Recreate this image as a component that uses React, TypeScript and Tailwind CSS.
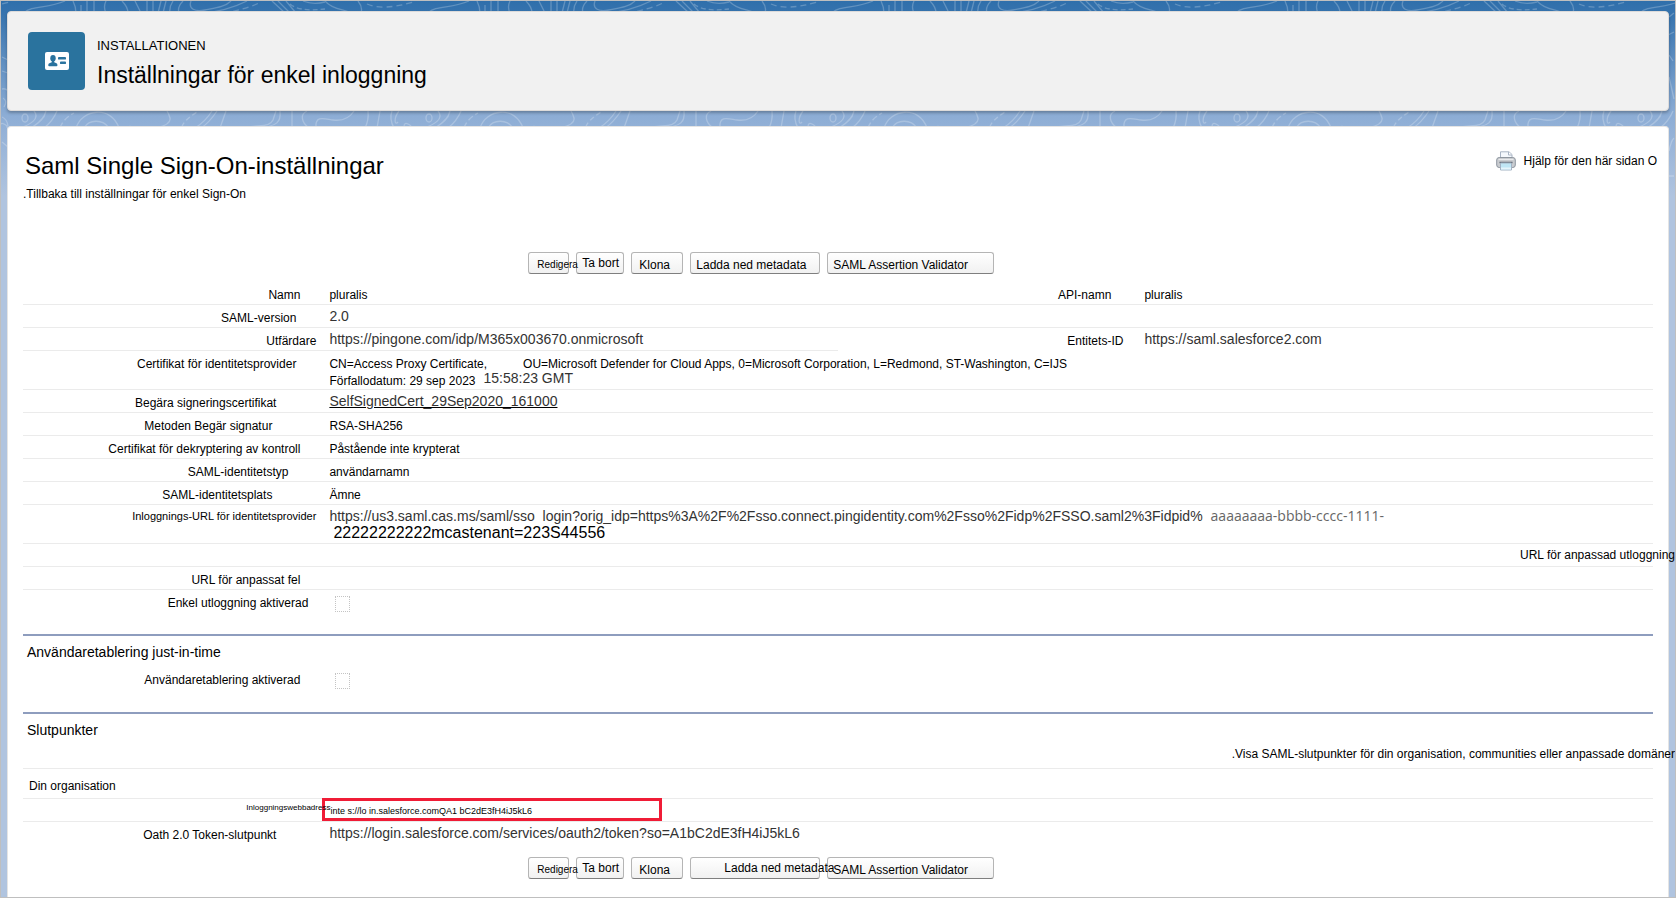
import type { ReactNode } from "react";
import clsx from "clsx";

type Inset = "none" | "xs" | "sm" | "md" | "lg" | "xl" | "2xl";

const insetClass: Record<Inset, string> = {
  none: "pr-0",
  xs: "pr-2",
  sm: "pr-4",
  md: "pr-5",
  lg: "pr-7",
  xl: "pr-10",
  "2xl": "pr-11",
};

function TopoBackground() {
  return (
    <svg
      aria-hidden="true"
      className="absolute inset-x-0 top-0 -z-10 h-[230px] w-full"
    >
      <defs>
        <linearGradient id="sky" x1="0" y1="0" x2="0" y2="1">
          <stop offset="0" stopColor="#2f6fab" />
          <stop offset="0.05" stopColor="#3673ae" />
          <stop offset="0.5" stopColor="#8dadd5" />
          <stop offset="0.85" stopColor="#b0c4df" />
          <stop offset="1" stopColor="#b0c4df" />
        </linearGradient>
        <pattern
          id="topo"
          x="156"
          y="0"
          width="404"
          height="230"
          patternUnits="userSpaceOnUse"
        >
          <g fill="none" stroke="#fff" strokeOpacity="0.23" strokeWidth="1.3">
            <path d="M4 0L1 12M9 0L6 12M16 0Q12 6 13 12M26 0Q20 6 22 12" />
            <path d="M34 0C31 8 38 11 48 9S68 6 74 0M46 12C60 11 74 8 90 0" />
            <path d="M66 12Q88 9 104 1" strokeDasharray="6 4" />
            <path d="M115 0L128 12M121 0L133 12M129 0L139 12" />
            <path d="M133 3Q142 11 168 8" strokeDasharray="5 3" />
            <path d="M146 0Q156 4 168 1M168 0C176 9 186 8 192 11M201 0Q206 6 204 12" />
            <path d="M210 3Q226 10 256 1" strokeDasharray="6 4" />
            <path d="M271 12C279 4 294 8 312 0" />
            <path d="M320 0Q323 6 323 12M328 4V12M334 0V12M341 0V12M353 0Q350 6 353 12M369 0Q375 6 375 12M382 0L388 12M394 0V12M400 0V12" />
            <path d="M0 127C8 125 14 122 13 117Q12 113 10 110" />
            <path d="M25 126Q26 120 40 111" strokeDasharray="5 3" />
            <path d="M55 110Q48 121 38 127M60 110Q52 122 44 127M69 110L63 127" />
            <path d="M83 127C104 123 112 127 116 119L119 110M98 127C122 126 124 120 123 110M135 110V127" />
            <path d="M152 127C144 121 143 113 150 110M159 126C158 114 168 118 176 119S192 118 197 110M211 110Q212 119 208 127M223 110L220 127M235 110Q232 118 237 127" />
            <path d="M242 110C236 118 238 125 241 121M247 126Q247 121 251 123T254 127" />
            <ellipse cx="272" cy="117" rx="3" ry="4" />
            <path d="M281 110C288 118 276 124 267 127M293 110C291 120 282 124 278 127M304 110Q300 120 291 127" />
            <path d="M307 127Q310 118 321 112" strokeDasharray="6 3" />
            <path d="M323 127C329 108 358 104 366 127M331 127C336 118 350 118 356 127" />
            <path d="M372 127Q378 124 380 127" />
          </g>
        </pattern>
      </defs>
      <rect width="100%" height="100%" fill="url(#sky)" />
      <rect width="100%" height="128" fill="url(#topo)" />
      <g fill="none" stroke="#fff" strokeOpacity="0.23" strokeWidth="1.3">
        <path d="M1 56L7 59M1 70L7 72M1 88Q5 87 7 90M2 97Q7 100 3 106M1 116Q6 118 7 125M1 141L7 146" />
      </g>
      <svg x="100%" overflow="visible">
        <g fill="none" stroke="#fff" strokeOpacity="0.23" strokeWidth="1.3">
          <path d="M-6 16L-1 12M-7 34L-1 31M-6 54L-2 60M-6 76L-1 98M-6 150Q-4 140-1 137M-7 175H-1" />
        </g>
      </svg>
    </svg>
  );
}

function IdCardIcon() {
  return (
    <svg width="24" height="18" viewBox="0 0 24 18" aria-hidden="true">
      <rect width="24" height="18" rx="2" fill="#fff" />
      <g fill="#2a739e">
        <ellipse cx="8" cy="6.2" rx="2.7" ry="3.2" />
        <path d="M6.8 8h2.4v2.2c1.6.6 3.2 1 3.2 2.6v.7c0 .5-.3.8-.8.8H4.1c-.5 0-.8-.3-.8-.8v-.7c0-1.6 1.9-2 3.5-2.6z" />
        <rect x="13" y="5" width="8" height="2.6" rx="0.9" />
        <rect x="15" y="9.5" width="6" height="2.6" rx="0.9" />
      </g>
    </svg>
  );
}

function PrinterIcon() {
  return (
    <svg width="20" height="20" viewBox="0 0 20 20" aria-hidden="true">
      <path d="M4.5 8V.8h8.5l3 2.700V8z" fill="#f4f8fc" stroke="#a9b4c4" />
      <path d="M12.5 1v3H16" fill="#fff" stroke="#a9b4c4" />
      <rect x="0.7" y="6.5" width="18.6" height="10" rx="2.5" fill="#c9ccd0" stroke="#8e969f" />
      <path d="M2.5 8.5h15" stroke="#e8eaec" />
      <path d="M3.5 11.5h13" stroke="#5d6670" strokeWidth="1.5" />
      <path d="M4.5 12h11v7h-11z" fill="#bfe6f5" stroke="#a4b3c4" />
      <path d="M5 16.5h10v2H5z" fill="#e6f6fc" />
    </svg>
  );
}

const buttonBase =
  "h-[22px] rounded-[3px] border border-[#b5b5b5] border-b-[#7f7f7f] bg-linear-to-b from-white to-[#f1f1f1] text-left text-xs leading-4 whitespace-nowrap";

function ActionButtons({ shifted = false }: { shifted?: boolean }) {
  return (
    <div className="ml-[31%] flex gap-[7px]">
      <button type="button" className={clsx(buttonBase, "w-[41px] pt-0.5 pl-2")}>
        <span className="relative z-10 text-[10px]">Redigera</span>
      </button>
      <button type="button" className={clsx(buttonBase, "w-12 pl-[5px]")}>
        Ta bort
      </button>
      <button type="button" className={clsx(buttonBase, "w-[52px] pt-1 pl-[7px]")}>
        Klona
      </button>
      <button
        type="button"
        className={clsx(
          buttonBase,
          "w-[130px]",
          shifted ? "pl-[33px]" : "pt-1 pl-[5px]",
        )}
      >
        <span className="relative z-10">Ladda ned metadata</span>
      </button>
      <button type="button" className={clsx(buttonBase, "w-[167px] pt-1 pl-[5px]")}>
        SAML Assertion Validator
      </button>
    </div>
  );
}

function LabelCell({
  children,
  inset = "md",
  htmlFor,
  small = false,
  line = true,
}: {
  children?: ReactNode;
  inset?: Inset;
  htmlFor?: string;
  small?: boolean;
  line?: boolean;
}) {
  return (
    <th
      scope="row"
      className={clsx(
        "h-[23px] w-[18%] text-right align-top leading-[18px] font-normal whitespace-nowrap",
        line && "border-b border-[#ebebeb]",
        small ? "pt-0.5 text-[11px]" : "pt-1 text-xs",
        insetClass[inset],
      )}
    >
      {htmlFor ? <label htmlFor={htmlFor}>{children}</label> : children}
    </th>
  );
}

function ValueCell({
  children,
  url = false,
  span = 3,
  line = true,
}: {
  children?: ReactNode;
  url?: boolean;
  span?: number;
  line?: boolean;
}) {
  return (
    <td
      colSpan={span}
      className={clsx(
        "pl-[13px] align-top leading-[18px] whitespace-nowrap",
        line && "border-b border-[#ebebeb]",
        url ? "pt-0.5 text-sm text-[#333]" : "pt-1 text-xs",
      )}
    >
      {children}
    </td>
  );
}

function CheckBox({ id }: { id: string }) {
  return (
    <input
      id={id}
      type="checkbox"
      className="mt-0.5 ml-1.5 block h-4 w-[15px] appearance-none border border-dotted border-[#c4c4c4] bg-white"
    />
  );
}

const tableClass = "w-full table-fixed border-separate border-spacing-0";

export default function App() {
  return (
    <div className="relative isolate flex min-h-screen flex-col overflow-hidden border border-[#bfbfbf] bg-[#b0c4df] px-1.5 pt-2.5 font-['Liberation_Sans',Arial,sans-serif] text-black">
      <TopoBackground />

      <header className="flex items-start gap-3 rounded border border-[#dddbda] bg-[#f1f1f1] py-5 pl-5 shadow-[0_2px_3px_rgba(0,0,0,0.25)]">
        <div className="flex h-[58px] w-[57px] items-center justify-center rounded bg-[#2a739e]">
          <IdCardIcon />
        </div>
        <div className="flex flex-col gap-1 pt-1">
          <p className="text-[13px] leading-5">INSTALLATIONEN</p>
          <h1 className="text-[23px] leading-[30px]">Inställningar för enkel inloggning</h1>
        </div>
      </header>

      <main className="mt-[15px] flex-1 rounded-t border border-b-0 border-[#e4e4e4] bg-white px-[15px] pt-6 pb-4">
        <div className="flex items-start justify-between">
          <div>
            <h2 className="pl-0.5 text-2xl leading-[30px]">Saml Single Sign-On-inställningar</h2>
            <a href="#tillbaka" className="block pt-0.5 text-xs leading-[22px]">
              .Tillbaka till inställningar för enkel Sign-On
            </a>
          </div>
          <a href="#help" className="-mr-1 flex items-center gap-2 text-xs leading-5">
            <PrinterIcon />
            Hjälp för den här sidan O
          </a>
        </div>

        <div className="mt-[47px] mb-2">
          <ActionButtons />
        </div>

        <table className={tableClass}>
          <colgroup>
            <col className="w-[18%]" />
            <col className="w-[32%]" />
            <col className="w-[18%]" />
            <col className="w-[32%]" />
          </colgroup>
          <tbody>
            <tr>
              <LabelCell inset="sm">Namn</LabelCell>
              <ValueCell span={1}>pluralis</ValueCell>
              <LabelCell>API-namn</LabelCell>
              <ValueCell span={1}>pluralis</ValueCell>
            </tr>
            <tr>
              <LabelCell>SAML-version</LabelCell>
              <ValueCell url>2.0</ValueCell>
            </tr>
            <tr>
              <LabelCell inset="none">Utfärdare</LabelCell>
              <ValueCell span={1} url>
                https://pingone.com/idp/M365x003670.onmicrosoft
              </ValueCell>
              <LabelCell inset="xs" line={false}>
                Entitets-ID
              </LabelCell>
              <ValueCell span={1} url line={false}>
                https://saml.salesforce2.com
              </ValueCell>
            </tr>
            <tr>
              <LabelCell>Certifikat för identitetsprovider</LabelCell>
              <ValueCell>
                <div className="flex gap-9">
                  <span>CN=Access Proxy Certificate,</span>
                  <span>
                    OU=Microsoft Defender for Cloud Apps, 0=Microsoft Corporation, L=Redmond,
                    ST-Washington, C=IJS
                  </span>
                </div>
                <div className="flex h-4 gap-2 leading-4">
                  <span>Förfallodatum: 29 sep 2023</span>
                  <span className="text-sm leading-[10px] text-[#333]">15:58:23 GMT</span>
                </div>
              </ValueCell>
            </tr>
            <tr>
              <LabelCell inset="xl">Begära signeringscertifikat</LabelCell>
              <ValueCell url>
                <a href="#cert" className="underline decoration-black underline-offset-1">
                  SelfSignedCert_29Sep2020_161000
                </a>
              </ValueCell>
            </tr>
            <tr>
              <LabelCell inset="2xl">Metoden Begär signatur</LabelCell>
              <ValueCell>RSA-SHA256</ValueCell>
            </tr>
            <tr>
              <LabelCell inset="sm">Certifikat för dekryptering av kontroll</LabelCell>
              <ValueCell>Påstående inte krypterat</ValueCell>
            </tr>
            <tr>
              <LabelCell inset="lg">SAML-identitetstyp</LabelCell>
              <ValueCell>användarnamn</ValueCell>
            </tr>
            <tr>
              <LabelCell inset="2xl">SAML-identitetsplats</LabelCell>
              <ValueCell>Ämne</ValueCell>
            </tr>
            <tr>
              <LabelCell inset="none" small>
                Inloggnings-URL för identitetsprovider
              </LabelCell>
              <ValueCell url>
                <div className="flex gap-2">
                  <span>
                    https://us3.saml.cas.ms/saml/sso&nbsp;&nbsp;login?orig_idp=https%3A%2F%2Fsso.connect.pingidentity.com%2Fsso%2Fidp%2FSSO.saml2%3Fidpid%
                  </span>
                  <span className="font-['Open_Sans','Noto_Sans',sans-serif] text-[#666]">
                    aaaaaaaa-bbbb-cccc-1111-
                  </span>
                </div>
                <div className="pb-0.5 pl-1 text-base leading-4 text-black">
                  22222222222mcastenant=223S44556
                </div>
              </ValueCell>
            </tr>
            <tr>
              <th
                scope="row"
                colSpan={4}
                className="h-[23px] border-b border-[#ebebeb] pt-0.5 text-right align-top text-xs leading-[18px] font-normal whitespace-nowrap"
              >
                <div className="-mr-[22px]">URL för anpassad utloggning</div>
              </th>
            </tr>
            <tr>
              <LabelCell inset="sm">URL för anpassat fel</LabelCell>
              <ValueCell />
            </tr>
            <tr>
              <LabelCell inset="xs" htmlFor="single-logout" line={false}>
                Enkel utloggning aktiverad
              </LabelCell>
              <ValueCell line={false}>
                <CheckBox id="single-logout" />
              </ValueCell>
            </tr>
          </tbody>
        </table>

        <section className="mt-[21px] border-t-2 border-[#8e9dbe] pt-1.5">
          <h3 className="pl-1 text-sm leading-5">Användaretablering just-in-time</h3>
          <table className={clsx(tableClass, "mt-[5px]")}>
            <tbody>
              <tr>
                <LabelCell inset="sm" htmlFor="user-provisioning" line={false}>
                  Användaretablering aktiverad
                </LabelCell>
                <ValueCell line={false}>
                  <CheckBox id="user-provisioning" />
                </ValueCell>
              </tr>
            </tbody>
          </table>
        </section>

        <section className="mt-[22px] border-t-2 border-[#8e9dbe] pt-1.5">
          <h3 className="pl-1 text-sm leading-5">Slutpunkter</h3>
          <p className="-mr-[22px] pt-[5px] text-right text-xs leading-[18px]">
            .Visa SAML-slutpunkter för din organisation, communities eller anpassade domäner
          </p>
          <h4 className="mt-[5px] border-y border-[#ebebeb] pt-2 pb-[3px] pl-1.5 text-xs leading-[18px]">
            Din organisation
          </h4>
          <table className={tableClass}>
            <tbody>
              <tr>
                <th
                  scope="row"
                  className="h-[23px] w-[18%] border-b border-[#ebebeb] text-right align-top text-[8px] leading-[18px] font-normal whitespace-nowrap"
                >
                  <div className="relative z-10 -mr-3.5">Inloggningswebbadress</div>
                </th>
                <td colSpan={3} className="h-[23px] border-b border-[#ebebeb] pl-1.5 align-top">
                  <div className="-mt-px -mb-px h-[23px] w-[340px] border-[3px] border-[#f01c36] pt-0.5 pl-[5px] text-[9px] leading-4 whitespace-nowrap">
                    inte s://lo in.salesforce.comQA1 bC2dE3fH4iJ5kL6
                  </div>
                </td>
              </tr>
              <tr>
                <LabelCell inset="xl" line={false}>
                  Oath 2.0 Token-slutpunkt
                </LabelCell>
                <ValueCell url line={false}>
                  https://login.salesforce.com/services/oauth2/token?so=A1bC2dE3fH4iJ5kL6
                </ValueCell>
              </tr>
            </tbody>
          </table>
          <div className="mt-3">
            <ActionButtons shifted />
          </div>
        </section>
      </main>
    </div>
  );
}
